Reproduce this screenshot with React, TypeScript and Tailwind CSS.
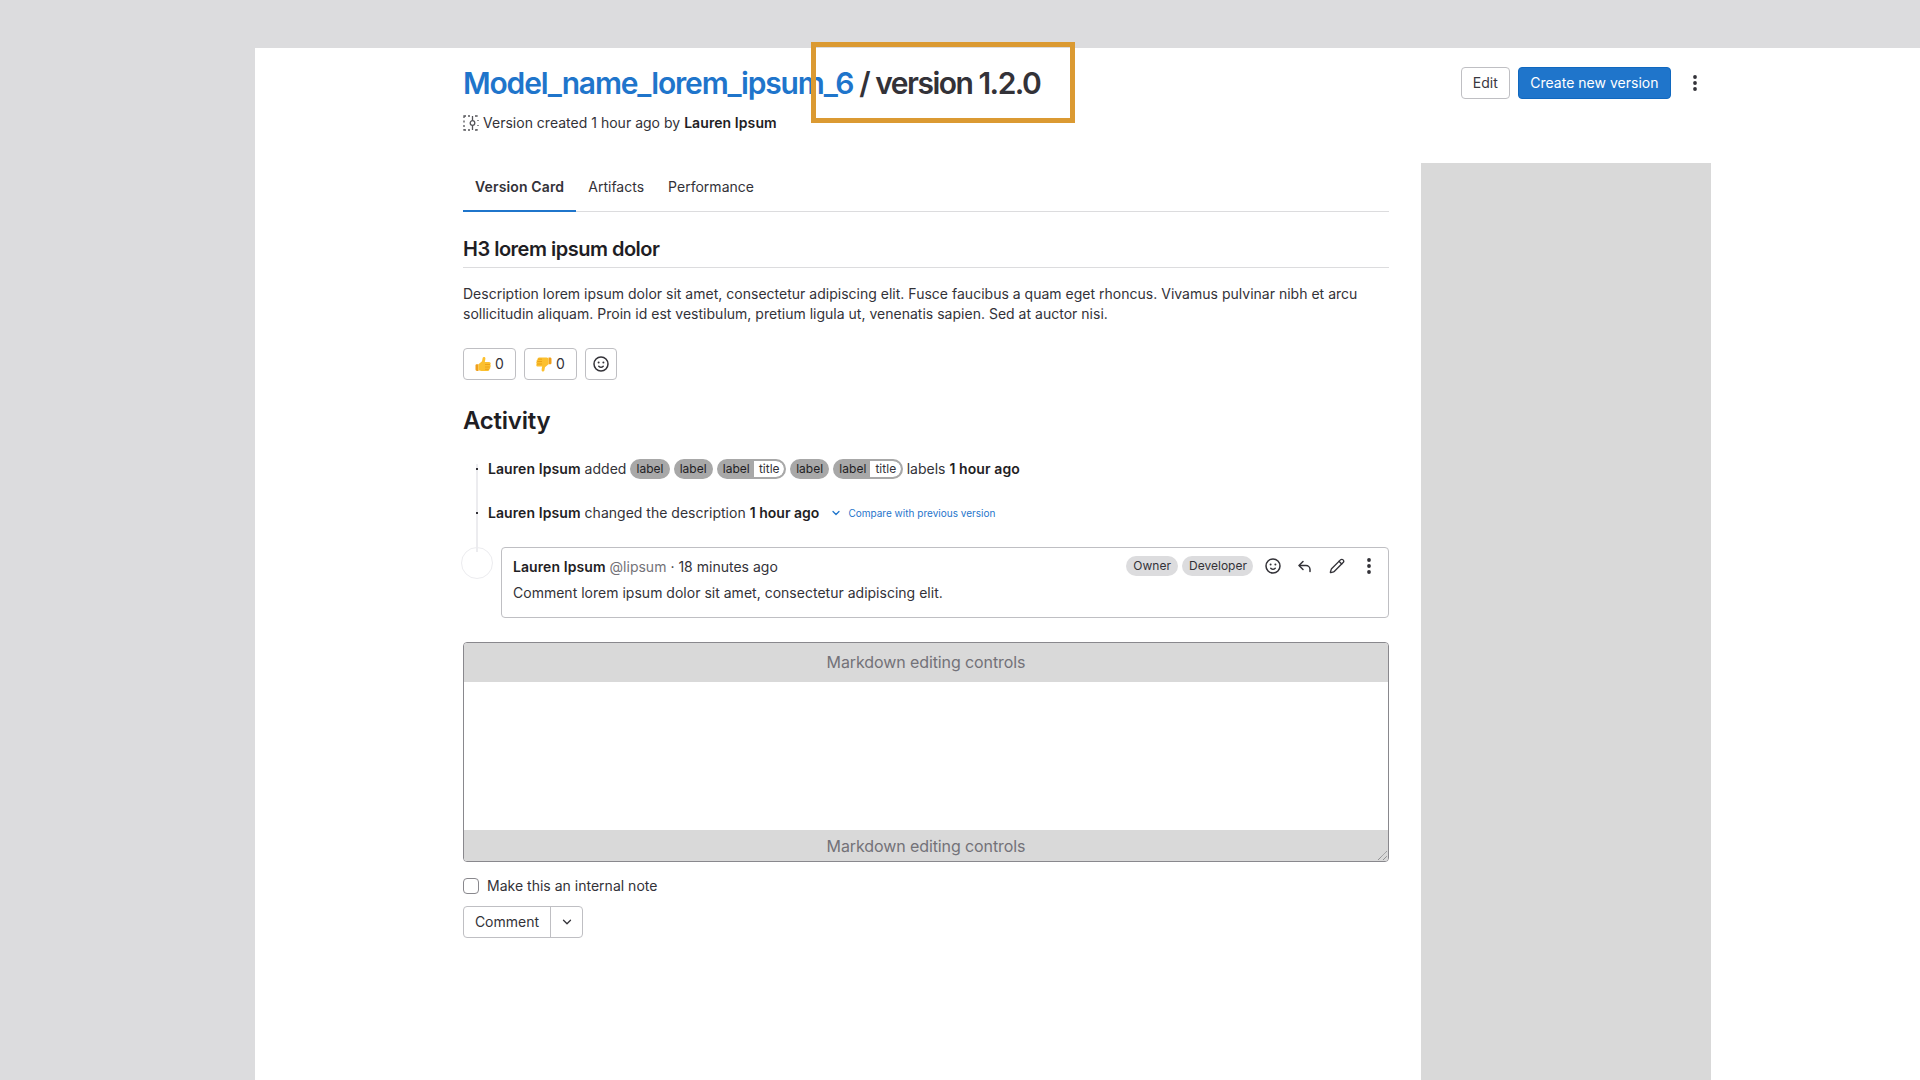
import { ChevronDown, Pencil } from 'lucide-react';

function Kebab() {
  return (
    <svg width="16" height="16" viewBox="0 0 16 16" fill="currentColor">
      <circle cx="8" cy="2" r="1.9" />
      <circle cx="8" cy="8" r="1.9" />
      <circle cx="8" cy="14" r="1.9" />
    </svg>
  );
}

function SmileIcon() {
  return (
    <svg width="16" height="16" viewBox="0 0 16 16" fill="none" stroke="currentColor" strokeWidth="1.5">
      <circle cx="8" cy="8" r="7" />
      <circle cx="5.6" cy="6.4" r="1" fill="currentColor" stroke="none" />
      <circle cx="10.4" cy="6.4" r="1" fill="currentColor" stroke="none" />
      <path d="M5.8 10.2c1.2 1.2 3.2 1.2 4.4 0" strokeLinecap="round" />
    </svg>
  );
}

function ReplyIcon() {
  return (
    <svg width="16" height="16" viewBox="0 0 16 16" fill="none" stroke="currentColor" strokeWidth="1.5" strokeLinecap="round" strokeLinejoin="round">
      <path d="M6 3.5 2 7.5l4 4" />
      <path d="M2.5 7.5h6.5a4 4 0 0 1 4 4v2" />
    </svg>
  );
}

function ModelIcon() {
  return (
    <svg width="16" height="16" viewBox="0 0 16 16" fill="none" stroke="#55555a" strokeWidth="1.3">
      <path d="M1 3V1h2M5 1h2M12 1h2v.8M1 5.5v2M1 10v2M1 14v1h2M5 15h2M12 15h2v-1M15 5v1M15 10v1" />
      <circle cx="9.5" cy="8" r="2.3" />
      <path d="M9.5 1v4.7M9.5 10.3V15" />
    </svg>
  );
}

function ThumbShape() {
  return (
    <>
      <path d="M.5 9.500c0-.8.6-1.300 1.300-1.300h1.700V15H2c-.9 0-1.500-.6-1.500-1.400z" fill="#ef9f1c" />
      <path d="M3.500 8.200 7 5.200 7.700 1.800C7.900.7 10.400.6 10.400 2.600c0 1.200-.4 2.400-.6 3.300h4.300c1.100 0 1.600.8 1.600 1.700 0 .5-.2.900-.4 1.200.3.400.4.700.4 1.200 0 .5-.2.900-.5 1.200.2.400.2.700.1 1.100-.2.500-.5.800-.9 1 .1.900-.5 1.700-1.500 1.700H6.500c-1.500 0-3-.4-3-1.400z" fill="#fcc02e" />
      <path d="M10 8.500h5M10 11h4.700M10 13.300h3.800" stroke="#e69a12" strokeWidth=".8" fill="none" />
    </>
  );
}

function ThumbUp() {
  return (
    <svg width="16" height="16" viewBox="0 0 16 16">
      <ThumbShape />
    </svg>
  );
}

function ThumbDown() {
  return (
    <svg width="16" height="16" viewBox="0 0 16 16">
      <g transform="matrix(-1 0 0 -1 16 16.500)">
        <ThumbShape />
      </g>
    </svg>
  );
}

function Label({ title }: { title?: boolean }) {
  return (
    <span className="inline-flex h-[20px] items-stretch overflow-hidden rounded-full border-2 border-[#a8a8a8] bg-[#a8a8a8] text-[12px] leading-[16px] text-[#1f1e24]">
      <span className="px-[4.1px]">label</span>
      {title && <span className="rounded-r-full bg-white pl-[5px] pr-[4.5px] text-[#333238]">title</span>}
    </span>
  );
}

function Name({ children }: { children: string }) {
  return <strong className="font-semibold tracking-[0.08px] text-[#1f1e24]">{children}</strong>;
}

export default function App() {
  return (
    <div className="h-[1080px] overflow-hidden bg-[#dcdcde] pl-[255px] pt-12 font-['Inter',sans-serif] text-sm tracking-[0.012px] text-[#333238]">
      <div className="h-full bg-white pl-[208px] pr-[209px]">
        {/* Header */}
        <div className="flex h-[115px] items-start justify-between">
          <div>
            <h1 className="mt-4 text-[30px] font-semibold leading-[38px] tracking-[-0.05em]">
              <span className="tracking-[-0.039em] text-[#1f75cb]">Model_name_lorem_ipsum_6</span> / version 1.2.0
            </h1>
            <p className="mt-[11px] flex items-center gap-1 leading-5">
              <ModelIcon />
              <span>
                Version created 1 hour ago by <Name>Lauren Ipsum</Name>
              </span>
            </p>
          </div>
          <div className="mt-[19px] flex items-center">
            <button className="h-8 rounded border border-[#bfbfc3] px-[11px] text-[#3a383f]">Edit</button>
            <button className="ml-2 h-8 rounded border border-[#1068bf] bg-[#1f75cb] px-[11.5px] text-white">
              Create new version
            </button>
            <span className="ml-4 mr-2 text-[#333238]">
              <Kebab />
            </span>
          </div>
        </div>

        <div className="flex gap-8">
          <div className="w-[926px]">
            {/* Tabs */}
            <div className="flex h-[49px] border-b border-[#dcdcde]">
              <span className="flex h-[49px] items-center border-b-2 border-[#1f75cb] px-3 font-semibold tracking-[0.01em] text-[#333238]">
                Version Card
              </span>
              <span className="flex items-center px-3">Artifacts</span>
              <span className="flex items-center px-3">Performance</span>
            </div>

            <h3 className="mt-[22px] border-b border-[#dcdcde] pb-[3px] text-[20px] font-semibold leading-[30px] tracking-[-0.025em] text-[#1f1e24]">
              H3 lorem ipsum dolor
            </h3>
            <p className="mt-4 leading-5">
              Description lorem ipsum dolor sit amet, consectetur adipiscing elit. Fusce faucibus a quam eget rhoncus.
              Vivamus pulvinar nibh et arcu sollicitudin aliquam. Proin id est vestibulum, pretium ligula ut, venenatis
              sapien. Sed at auctor nisi.
            </p>

            {/* Reactions */}
            <div className="mt-[24px] flex gap-2">
              <button className="flex h-8 w-[53px] items-center justify-center gap-1 rounded border border-[#bfbfc3]">
                <ThumbUp />0
              </button>
              <button className="flex h-8 w-[53px] items-center justify-center gap-1 rounded border border-[#bfbfc3]">
                <ThumbDown />0
              </button>
              <button className="flex h-8 w-8 items-center justify-center rounded border border-[#bfbfc3]">
                <SmileIcon />
              </button>
            </div>

            <h2 className="mt-[24px] text-[24px] font-semibold leading-[34px] tracking-[-0.01em] text-[#1f1e24]">
              Activity
            </h2>

            {/* Timeline */}
            <div className="relative mt-[21px]">
              <div className="absolute left-[13px] top-[5px] h-[88px] w-0.5 bg-[#ececef]" />
              <div className="absolute left-[13px] top-[9px] h-0.5 w-0.5 bg-[#333238]" />
              <div className="absolute left-[13px] top-[53px] h-0.5 w-0.5 bg-[#333238]" />
              <div className="flex h-5 items-center gap-1 pl-[25px]">
                <Name>Lauren Ipsum</Name>
                <span>added</span>
                <Label />
                <Label />
                <Label title />
                <Label />
                <Label title />
                <span>labels</span>
                <Name>1 hour ago</Name>
              </div>
              <div className="mt-6 flex h-5 items-center pl-[25px]">
                <Name>Lauren Ipsum</Name>
                <span className="ml-1">changed the description</span>
                <strong className="ml-1 font-semibold text-[#1f1e24]">1 hour ago</strong>
                <ChevronDown size={12} strokeWidth={2.5} className="ml-[11px] text-[#1f75cb]" />
                <span className="ml-[6px] text-[10px] text-[#1f75cb]">Compare with previous version</span>
              </div>

              <div className="relative mt-6 -ml-0.5 flex gap-2">
                <div className="h-8 w-8 shrink-0 rounded-full border border-[#ececef]" />
                <div className="flex h-[71px] flex-1 flex-col rounded border border-[#bfbfc3] pl-[11px] pr-[11px] pt-[9px]">
                  <div className="flex h-5 items-center justify-between">
                    <p>
                      <Name>Lauren Ipsum</Name> <span className="text-[#737278]">@lipsum</span> · 18 minutes ago
                    </p>
                    <div className="-mt-[2px] flex items-center text-[#333238]">
                      <span className="rounded-full bg-[#dcdcde] px-[7px] text-[12px] leading-5">Owner</span>
                      <span className="ml-1 rounded-full bg-[#dcdcde] pl-[7px] pr-[6px] text-[12px] leading-5">Developer</span>
                      <span className="ml-[12px]">
                        <SmileIcon />
                      </span>
                      <span className="ml-4">
                        <ReplyIcon />
                      </span>
                      <Pencil size={16} className="ml-4" />
                      <span className="ml-4">
                        <Kebab />
                      </span>
                    </div>
                  </div>
                  <p className="mt-[6px] leading-5">Comment lorem ipsum dolor sit amet, consectetur adipiscing elit.</p>
                </div>
              </div>
            </div>

            {/* Editor */}
            <div className="relative mt-[24px] flex h-[220px] flex-col justify-between overflow-hidden rounded border border-[#89888d] bg-white">
              <div className="flex h-[39px] items-center justify-center bg-[#d9d9d9] text-[16px] tracking-[-0.1px] text-[#737278]">
                Markdown editing controls
              </div>
              <div className="flex h-[31px] items-center justify-center bg-[#d9d9d9] pt-0.5 text-[16px] tracking-[-0.1px] text-[#737278]">
                Markdown editing controls
              </div>
              <svg className="absolute bottom-0 right-0" width="12" height="12" viewBox="0 0 12 12" stroke="#77777a">
                <path d="M2 11 11 2M7 11l4-4" strokeDasharray="1 0.6" />
              </svg>
            </div>

            <label className="mt-[14px] flex h-5 items-center gap-2">
              <span className="h-4 w-4 rounded-[4px] border border-[#89888d] bg-white" />
              <span>Make this an internal note</span>
            </label>

            <div className="mt-[10px] flex h-8 w-[120px] rounded border border-[#bfbfc3]">
              <span className="flex flex-1 items-center justify-center border-r border-[#bfbfc3]">Comment</span>
              <span className="flex w-[31px] items-center justify-center">
                <ChevronDown size={14} strokeWidth={2.2} />
              </span>
            </div>
          </div>

          {/* Sidebar placeholder */}
          <div className="h-[917px] w-[290px] bg-[#d9d9d9]" />
        </div>
      </div>

      {/* Annotation highlight */}
      <div className="absolute left-[811px] top-[42px] h-[81px] w-[264px] border-[5px] border-[#db9a32]" />
    </div>
  );
}
